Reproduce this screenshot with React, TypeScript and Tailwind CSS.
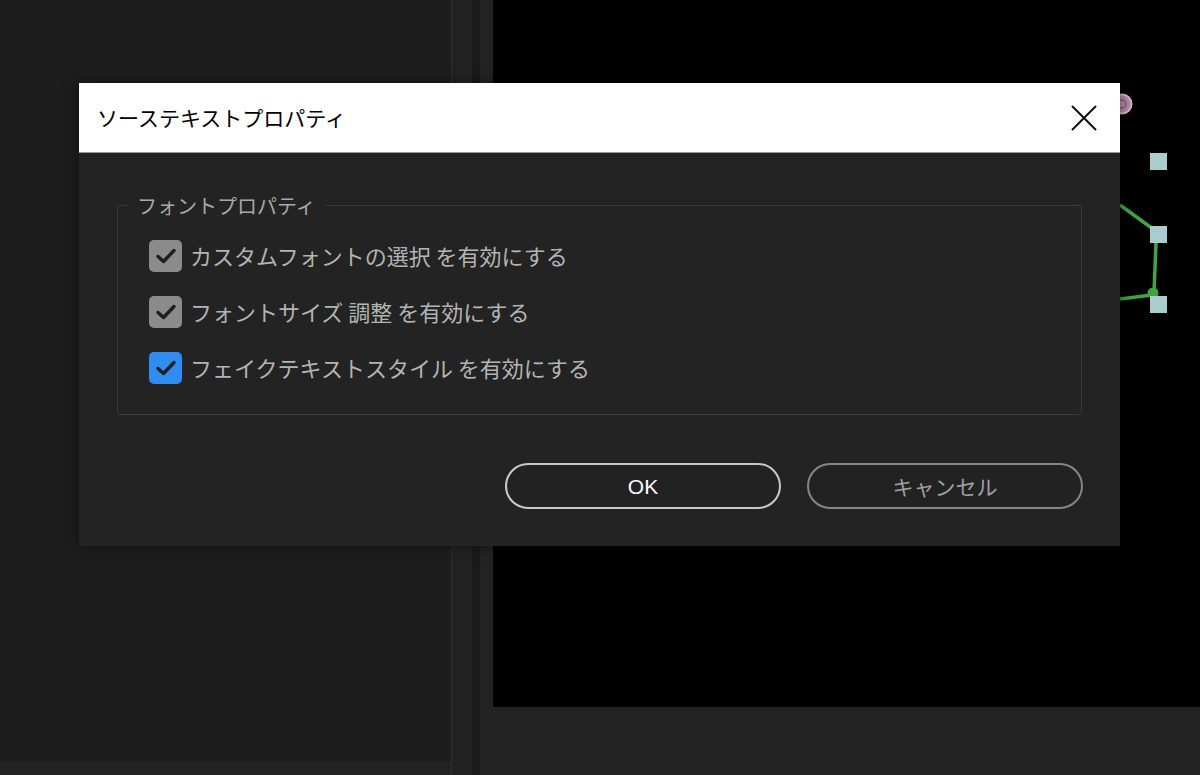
import React from "react";

const jp = { fontFamily: '"Noto Sans CJK JP", "Noto Sans", sans-serif' };

function Check({ blue }: { blue?: boolean }) {
  return (
    <div
      className={
        "w-[33px] h-[32px] rounded-[5px] flex items-center justify-center shrink-0 " +
        (blue ? "bg-[#2f8cf0]" : "bg-[#8b8b8b]")
      }
    >
      <svg width="22" height="20" viewBox="0 0 22 20">
        <path d="M3 10.5 L8.5 15.5 L19 4.5" fill="none" stroke="#1e1e1e" strokeWidth="3.4" strokeLinecap="round" strokeLinejoin="round" />
      </svg>
    </div>
  );
}

function Row({ label, blue }: { label: string; blue?: boolean }) {
  return (
    <div className="flex items-center gap-[8px] h-[32px]">
      <Check blue={blue} />
      <span className="text-[22px] text-[#b4b4b4] leading-none whitespace-pre -mt-[3px]" style={jp}>
        {label}
      </span>
    </div>
  );
}

export default function App() {
  return (
    <div className="relative w-[1200px] h-[775px] overflow-hidden bg-[#232323] flex" style={jp}>
      {/* left panel */}
      <div className="w-[451px] h-full flex flex-col">
        <div className="h-[761px] bg-[#1d1d1d]" />
        <div className="flex-1 bg-[#232323]" />
      </div>
      {/* dividers */}
      <div className="w-[1px] h-full bg-[#2e2e2e]" />
      <div className="w-[20px] h-full bg-[#222222]" />
      <div className="w-[8px] h-full bg-[#1a1a1a]" />
      <div className="w-[13px] h-full bg-[#232323]" />
      {/* canvas column */}
      <div className="flex-1 h-full flex flex-col">
        <div className="relative h-[707px] bg-black">
          <svg className="absolute left-0 top-0" width="707" height="707" viewBox="0 0 707 707">
            <circle cx="629" cy="104" r="9.5" fill="#b48aa4" stroke="#d8b4c8" strokeWidth="2" />
            <circle cx="629" cy="104" r="4" fill="none" stroke="#8a5a76" strokeWidth="1.5" />
            <line x1="627" y1="205" x2="660" y2="229" stroke="#3fa441" strokeWidth="3.5" />
            <line x1="663" y1="243" x2="661" y2="293" stroke="#3fa441" strokeWidth="3.5" />
            <line x1="627" y1="299" x2="659" y2="295" stroke="#3fa441" strokeWidth="3.5" />
            <circle cx="660" cy="293" r="5.5" fill="#3fa441" />
            <rect x="657" y="153" width="17" height="17" fill="#a9cccc" />
            <rect x="657" y="226" width="17" height="17" fill="#a9cccc" />
            <rect x="657" y="296" width="17" height="17" fill="#a9cccc" />
          </svg>
        </div>
        <div className="flex-1 bg-[#232323]" />
      </div>

      {/* dialog */}
      <div className="absolute left-[79px] top-[83px] w-[1041px] h-[463px] bg-[#232323] flex flex-col shadow-[0_0_12px_rgba(0,0,0,0.5)]">
        <div className="h-[70px] bg-white flex items-center justify-between pl-[18px] pr-[22px] border-b border-[#9a9a9a]">
          <span className="text-[21px] text-black leading-none" style={jp}>
            ソーステキストプロパティ
          </span>
          <svg width="28" height="28" viewBox="0 0 28 28">
            <path d="M2 2 L26 26 M26 2 L2 26" stroke="#111" strokeWidth="2" />
          </svg>
        </div>
        <div className="px-[38px] pt-[52px]">
          <div className="relative border border-[#3a3a3a] rounded-[3px] h-[210px] pl-[31px] pt-[34px] flex flex-col gap-[24px]">
            <span className="absolute left-[9px] top-[-10px] bg-[#232323] px-[10px] text-[20px] leading-none text-[#a8a8a8]" style={jp}>
              フォントプロパティ
            </span>
            <Row label="カスタムフォントの選択 を有効にする" />
            <Row label="フォントサイズ 調整 を有効にする" />
            <Row blue label="フェイクテキストスタイル を有効にする" />
          </div>
        </div>
        <div className="flex justify-end gap-[26px] pr-[37px] pt-[48px]">
          <button className="w-[276px] h-[46px] rounded-full border-2 border-[#c9c9c9] bg-[#222] text-white text-[21px] leading-none" style={{ fontFamily: '"Liberation Sans", "Noto Sans CJK JP", sans-serif' }}>
            OK
          </button>
          <button className="w-[276px] h-[46px] rounded-full border-2 border-[#868686] bg-[#222] text-[#a0a0a0] text-[21px] leading-none" style={jp}>
            キャンセル
          </button>
        </div>
      </div>
    </div>
  );
}
